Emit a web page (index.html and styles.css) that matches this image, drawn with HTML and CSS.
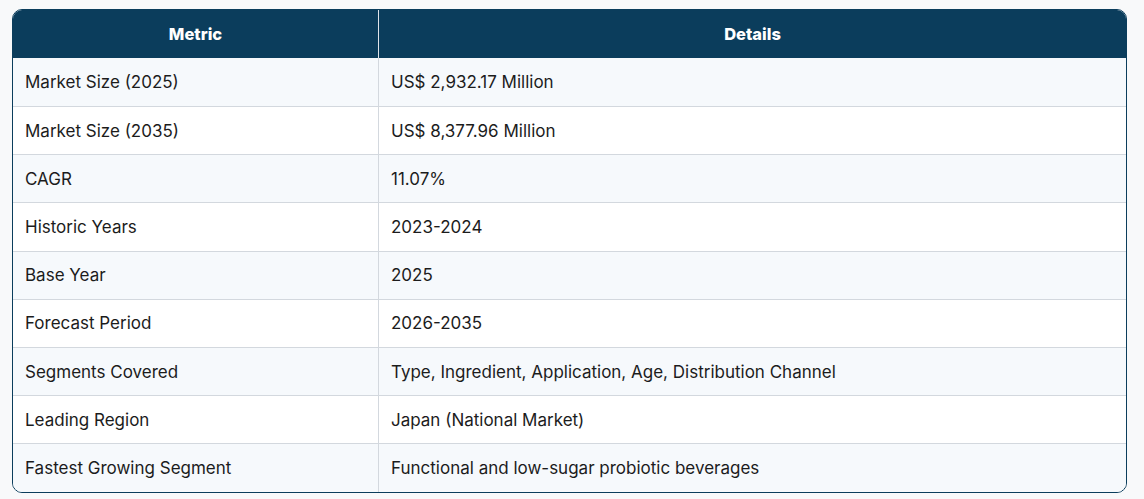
FILE: index.html
```html
<!DOCTYPE html>
<html lang="en">
<head>
<meta charset="utf-8">
<title>Metric Details</title>
<link rel="stylesheet" href="styles.css">
</head>
<body>
<div class="wrap">
  <table class="metrics">
    <thead>
      <tr><th class="c1">Metric</th><th>Details</th></tr>
    </thead>
    <tbody>
      <tr><td class="c1">Market Size (2025)</td><td>US$ 2,932.17 Million</td></tr>
      <tr><td class="c1">Market Size (2035)</td><td>US$ 8,377.96 Million</td></tr>
      <tr><td class="c1">CAGR</td><td>11.07%</td></tr>
      <tr><td class="c1">Historic Years</td><td>2023-2024</td></tr>
      <tr><td class="c1">Base Year</td><td>2025</td></tr>
      <tr><td class="c1">Forecast Period</td><td>2026-2035</td></tr>
      <tr><td class="c1">Segments Covered</td><td>Type, Ingredient, Application, Age, Distribution Channel</td></tr>
      <tr><td class="c1">Leading Region</td><td>Japan (National Market)</td></tr>
      <tr><td class="c1">Fastest Growing Segment</td><td>Functional and low-sugar probiotic beverages</td></tr>
    </tbody>
  </table>
</div>
</body>
</html>
```

FILE: styles.css
```css
html, body {
  margin: 0;
  padding: 0;
  background: #f8f9fa;
}
.wrap {
  padding: 9px 0 0 12px;
}
.metrics {
  width: 1115px;
  table-layout: fixed;
  border-collapse: separate;
  border-spacing: 0;
  border: 1px solid #0b3d5c;
  border-radius: 10px;
  overflow: hidden;
  font-family: Inter, "Liberation Sans", sans-serif;
  color: #1c1c1c;
  background: #fff;
}
.metrics th {
  box-sizing: border-box;
  background: #0b3d5c;
  color: #fff;
  font-weight: 800;
  font-size: 16.5px;
  height: 48px;
  padding: 0 13px;
  text-align: center;
  border-left: 1px solid #dfe4ea;
}
.metrics td {
  box-sizing: border-box;
  height: 48.2px;
  padding: 0 12px;
  font-size: 17px;
  border-top: 1px solid #d3d8de;
  border-left: 1px solid #d3d8de;
}
.metrics tbody tr:first-child td {
  border-top: none;
  height: 48px;
}
.metrics th.c1, .metrics td.c1 {
  width: 365px;
  border-left: none;
}
.metrics tbody tr:nth-child(odd) td {
  background: #f6f9fc;
}
.metrics tbody tr:nth-child(even) td {
  background: #ffffff;
}
```
